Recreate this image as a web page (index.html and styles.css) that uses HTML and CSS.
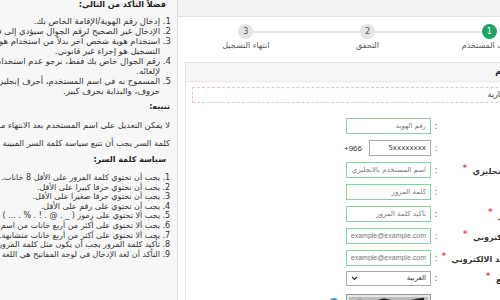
FILE: index.html
```html
<!DOCTYPE html>
<html lang="ar" dir="rtl">
<head>
  <meta charset="UTF-8">
  <meta name="viewport" content="width=device-width, initial-scale=1.0">
  <title>تسجيل مستخدم جديد</title>
  <link rel="stylesheet" href="styles.css">
</head>
<body>
  <div class="page">
    <main class="main">
      <div class="title-bar"></div>
      <div class="content">
        <ol class="steps">
          <li class="step current"><span class="num">1</span><span class="step-label">بيانات المستخدم</span></li>
          <li class="step"><span class="num">2</span><span class="step-label">التحقق</span></li>
          <li class="step"><span class="num">3</span><span class="step-label">انتهاء التسجيل</span></li>
        </ol>

        <section class="card">
          <div class="card-head">بيانات المستخدم</div>
          <div class="card-body">
            <div class="note">جميع الحقول إجبارية</div>

            <div class="fields">
              <div class="row">
                <label class="lbl">الهوية</label>
                <span class="colon">:</span>
                <div class="field"><input class="inp ok" type="text" placeholder="رقم الهوية"></div>
              </div>
              <div class="row">
                <label class="lbl">الجوال</label>
                <span class="colon">:</span>
                <div class="field phone">
                  <input class="inp" type="text" value="5xxxxxxxx">
                  <span class="code">+966</span>
                </div>
              </div>
              <div class="row">
                <label class="lbl">الاسم بالانجليزي <i class="req">*</i></label>
                <span class="colon">:</span>
                <div class="field"><input class="inp ok" type="text" placeholder="اسم المستخدم بالانجليزي"></div>
              </div>
              <div class="row">
                <label class="lbl">المرور</label>
                <span class="colon">:</span>
                <div class="field"><input class="inp ok" type="password" placeholder="كلمة المرور"></div>
              </div>
              <div class="row">
                <label class="lbl">كلمة السر <i class="req">*</i></label>
                <span class="colon">:</span>
                <div class="field"><input class="inp ok" type="password" placeholder="تأكيد كلمة المرور"></div>
              </div>
              <div class="row">
                <label class="lbl">البريد الالكتروني <i class="req">*</i></label>
                <span class="colon">:</span>
                <div class="field"><input class="inp ok ltr" type="text" placeholder="example@example.com"></div>
              </div>
              <div class="row">
                <label class="lbl">تأكيد البريد الالكتروني <i class="req">*</i></label>
                <span class="colon">:</span>
                <div class="field"><input class="inp ok ltr" type="text" placeholder="example@example.com"></div>
              </div>
              <div class="row lang">
                <label class="lbl">لغة الموقع <i class="req">*</i></label>
                <span class="colon">:</span>
                <div class="field">
                  <div class="select">
                    <span>العربية</span>
                    <svg width="7" height="5" viewBox="0 0 7 5"><path d="M1 1l2.5 2.5L6 1" fill="none" stroke="#333" stroke-width="1.2"/></svg>
                  </div>
                </div>
              </div>
              <div class="row captcha-row">
                <label class="lbl"></label>
                <span class="colon"></span>
                <div class="field">
                  <svg class="captcha" width="85" height="22" viewBox="0 0 85 22">
                    <rect x="0.5" y="0.5" width="84" height="21" fill="#e8e8e8" stroke="#999"/>
                    <rect x="3" y="3" width="79" height="16" fill="#bdbdbd"/>
                    <path d="M8 8c8-4 14 3 22 0s12-3 18 1 14-3 30-4" fill="none" stroke="#222" stroke-width="2.5"/>
                    <path d="M12 14c10-3 20 2 30-1s18 0 28-3" fill="none" stroke="#333" stroke-width="2"/>
                  </svg>
                </div>
                <svg class="refresh" width="12" height="12" viewBox="0 0 12 12"><circle cx="6" cy="6" r="5" fill="#3aa6e0"/></svg>
              </div>
            </div>
          </div>
        </section>
      </div>
    </main>

    <aside class="side">
      <h4>فضلاً التأكد من التالي:</h4>
      <ol class="notes">
        <li>إدخال رقم الهوية/الإقامة الخاص بك.</li>
        <li>الإدخال غير الصحيح لرقم الجوال سيؤدي إلى فشل عملية التسجيل.</li>
        <li>استخدام هوية شخص آخر بدلاً من استخدام هويتك الخاصة في عملية<br>التسجيل هو إجراء غير قانوني.</li>
        <li>رقم الجوال خاص بك فقط، نرجو عدم استخدامه في أي حساب آخر تجنباً<br>لإلغائه.</li>
        <li>المسموح به في اسم المستخدم، أحرف إنجليزية، أرقام، ولا يقل عن ثمانية<br>حروف، والبداية بحرف كبير.</li>
      </ol>
      <h4 class="warn">تنبيه:</h4>
      <p>لا يمكن التعديل على اسم المستخدم بعد الانتهاء من التسجيل.</p>
      <p>كلمة السر يجب أن تتبع سياسة كلمة السر المبينة أدناه.</p>
      <h4>سياسة كلمة السر:</h4>
      <ol class="notes policy">
        <li>يجب أن تحتوي كلمة المرور على الأقل 8 خانات.</li>
        <li>يجب أن تحتوي حرفا كبيرا على الأقل.</li>
        <li>يجب أن تحتوي حرفا صغيرا على الأقل.</li>
        <li>يجب أن تحتوي على رقم على الأقل.</li>
        <li>يجب ألا تحتوي على رموز ( _ . @ . ! . % . ... )</li>
        <li>يجب ألا تحتوي على أكثر من أربع خانات من اسم المستخدم.</li>
        <li>يجب ألا تحتوي على أكثر من أربع خانات متشابهة.</li>
        <li>تأكيد كلمة المرور يجب أن يكون مثل كلمة المرور.</li>
        <li>التأكد أن لغة الإدخال في لوحة المفاتيح هي اللغة الإنجليزية.</li>
      </ol>
    </aside>
  </div>
</body>
</html>
```

FILE: styles.css
```css
html, body {
  margin: 0;
  height: 100%;
  overflow: hidden;
}
body {
  direction: rtl;
  font-family: "DejaVu Sans", sans-serif;
  font-size: 8px;
  color: #333;
  background: #fff;
}
.page {
  display: flex;
  width: 685px;
  margin-right: -82px;
  min-height: 300px;
}
.main {
  width: 405px;
  flex: none;
  box-sizing: border-box;
  border-left: 1px solid #d9d9d9;
}
.title-bar {
  height: 16px;
  background: #f2f2f2;
  border-bottom: 1px solid #e2e2e2;
}
.content {
  padding: 0 7px;
}

/* wizard */
.steps {
  display: flex;
  width: 365px;
  margin: 7px auto 0 0;
  padding: 0;
  list-style: none;
}
.step {
  flex: 1;
  position: relative;
  text-align: center;
  color: #555;
}
.step + .step::before {
  content: "";
  position: absolute;
  top: 7px;
  left: 50%;
  width: 100%;
  height: 2px;
  background: #e6e6e6;
}
.num {
  position: relative;
  z-index: 1;
  display: block;
  width: 15px;
  height: 15px;
  margin: 0 auto;
  border-radius: 50%;
  background: #e4e4e4;
  color: #555;
  font-size: 8px;
  line-height: 15px;
}
.current .num {
  background: #1ba462;
  color: #fff;
}
.step-label {
  display: block;
  margin-top: 1px;
  line-height: 11px;
}

/* card */
.card {
  margin-top: 11px;
  border: 1px solid #e3e3e3;
}
.card-head {
  height: 18px;
  line-height: 18px;
  padding-right: 14px;
  background: #f5f5f5;
  border-bottom: 1px solid #e6e6e6;
  font-weight: bold;
  color: #222;
}
.card-body {
  padding: 5px 6px 20px;
}
.note {
  height: 14px;
  line-height: 14px;
  padding-right: 12px;
  border: 1px dashed #efc3cd;
  color: #333;
}

.fields {
  margin-top: 15px;
  padding-right: 30px;
}
.row {
  display: flex;
  align-items: center;
  height: 16px;
  margin-bottom: 6px;
}
.row.lang {
  margin-top: -2px;
  margin-bottom: 8px;
}
.lbl {
  width: 97px;
  flex: none;
  font-weight: bold;
  color: #333;
  white-space: nowrap;
}
.req {
  font-style: normal;
  color: #e64a4a;
  vertical-align: 3px;
  margin-right: 3px;
}
.colon {
  width: 10px;
  flex: none;
  text-align: center;
  color: #555;
}
.field {
  width: 85px;
  flex: none;
  display: flex;
  align-items: center;
}
.inp {
  width: 100%;
  height: 16px;
  box-sizing: border-box;
  padding: 0 4px;
  border: 1px solid #aaa;
  font-family: "DejaVu Sans", sans-serif;
  font-size: 7px;
  color: #333;
  text-align: right;
  background: #fff;
  outline: none;
}
.inp.ok {
  border-color: #86d3a1;
}
.inp::placeholder {
  color: #777;
}
.inp.ltr::placeholder {
  font-family: "Liberation Sans", sans-serif;
}
.phone .inp {
  width: 62px;
}
.code {
  margin-right: 7px;
  direction: ltr;
  font-family: "Liberation Sans", sans-serif;
  font-size: 8px;
  color: #333;
}
.select {
  display: flex;
  justify-content: space-between;
  align-items: center;
  width: 100%;
  height: 15px;
  box-sizing: border-box;
  padding: 0 4px;
  border: 1px solid #aaa;
  font-size: 7px;
}
.captcha-row {
  height: 22px;
  align-items: flex-start;
}
.refresh {
  margin: 3px 6px 0 0;
}

/* sidebar */
.side {
  flex: 1;
  background: #f7f7f7;
  padding: 0 7px 0 0;
  line-height: 10px;
  color: #333;
  white-space: nowrap;
  overflow: hidden;
}
.side h4 {
  margin: 0;
  padding-right: 4px;
  font-size: 8px;
  line-height: 10px;
  color: #222;
}
.side h4.warn {
  padding-right: 0;
}
.side p {
  margin: 8px 0 0;
  font-size: 8.3px;
}
.notes {
  margin: 6px 0 0;
  padding: 0 10px 0 0;
  font-size: 8.5px;
}
.notes + h4 {
  margin-top: 6px;
}
.side p + h4 {
  margin-top: 7px;
}
.side h4 + p {
  margin-top: 8px;
}
.policy {
  margin-top: 8px;
  font-size: 8px;
  line-height: 9.6px;
}
```
